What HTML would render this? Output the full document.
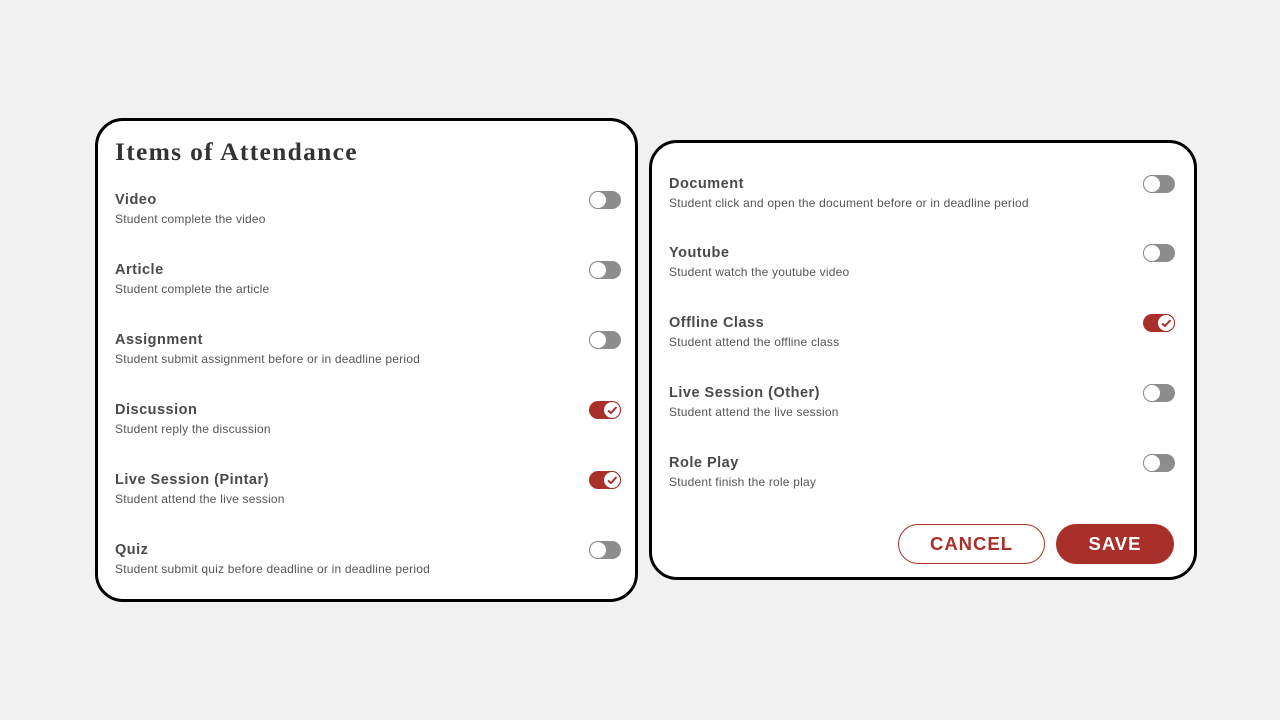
<!DOCTYPE html>
<html><head><style>
body{margin:0;width:1280px;height:720px;background:#f1f1f1;position:relative;font-family:"Liberation Sans",sans-serif;overflow:hidden}
.card{position:absolute;background:#fff;border:3px solid #000;border-radius:28px;box-sizing:border-box}
h1{position:absolute;left:17px;top:16px;margin:0;font-family:"Liberation Serif",serif;font-weight:bold;font-size:25.5px;color:#333;letter-spacing:1.3px}
.row{position:absolute;left:17px;right:14px;height:44px}
.t{font-weight:bold;font-size:14.5px;color:#4a4a4a;letter-spacing:0.5px;line-height:18px}
.d{font-size:12px;color:#555;line-height:16px;margin-top:2px;letter-spacing:0.2px}
.tg{position:absolute;right:0;top:0;width:32px;height:18px;border-radius:9px;background:#8d8d8d}
.tg::after{content:"";position:absolute;left:0;top:0;width:16px;height:16px;border-radius:50%;background:#fff;border:1px solid #8d8d8d}
.tg.on{background:#a9302a}
.tg.on::after{left:14px;border-color:#a9302a}
.tg.on svg{position:absolute;left:17px;top:3px;z-index:2}
.btn{position:absolute;top:381px;height:40px;border-radius:20px;box-sizing:border-box;font-weight:bold;font-size:18.5px;letter-spacing:1px;text-align:center;line-height:40px}
</style></head><body>
<div class="card" style="left:95px;top:118px;width:543px;height:484px">
<h1>Items of Attendance</h1>
<div class="row" style="top:70px"><div class="t">Video</div><div class="d">Student complete the video</div><div class="tg"></div></div>
<div class="row" style="top:140px"><div class="t">Article</div><div class="d">Student complete the article</div><div class="tg"></div></div>
<div class="row" style="top:210px"><div class="t">Assignment</div><div class="d">Student submit assignment before or in deadline period</div><div class="tg"></div></div>
<div class="row" style="top:280px"><div class="t">Discussion</div><div class="d">Student reply the discussion</div><div class="tg on"><svg width="12" height="12" viewBox="0 0 12 12"><path d="M2 6.5L5 9L10.5 3" stroke="#a9302a" stroke-width="2" fill="none"/></svg></div></div>
<div class="row" style="top:350px"><div class="t">Live Session (Pintar)</div><div class="d">Student attend the live session</div><div class="tg on"><svg width="12" height="12" viewBox="0 0 12 12"><path d="M2 6.5L5 9L10.5 3" stroke="#a9302a" stroke-width="2" fill="none"/></svg></div></div>
<div class="row" style="top:420px"><div class="t">Quiz</div><div class="d">Student submit quiz before deadline or in deadline period</div><div class="tg"></div></div>
</div>
<div class="card" style="left:649px;top:140px;width:548px;height:440px">
<div class="row" style="top:32px;right:19px"><div class="t">Document</div><div class="d">Student click and open the document before or in deadline period</div><div class="tg"></div></div>
<div class="row" style="top:101px;right:19px"><div class="t">Youtube</div><div class="d">Student watch the youtube video</div><div class="tg"></div></div>
<div class="row" style="top:171px;right:19px"><div class="t">Offline Class</div><div class="d">Student attend the offline class</div><div class="tg on"><svg width="12" height="12" viewBox="0 0 12 12"><path d="M2 6.5L5 9L10.5 3" stroke="#a9302a" stroke-width="2" fill="none"/></svg></div></div>
<div class="row" style="top:241px;right:19px"><div class="t">Live Session (Other)</div><div class="d">Student attend the live session</div><div class="tg"></div></div>
<div class="row" style="top:311px;right:19px"><div class="t">Role Play</div><div class="d">Student finish the role play</div><div class="tg"></div></div>
<div class="btn" style="left:246px;width:147px;border:1px solid #a9302a;color:#a9302a;line-height:38px">CANCEL</div>
<div class="btn" style="left:404px;width:118px;background:#a9302a;color:#fff">SAVE</div>
</div>
</body></html>
